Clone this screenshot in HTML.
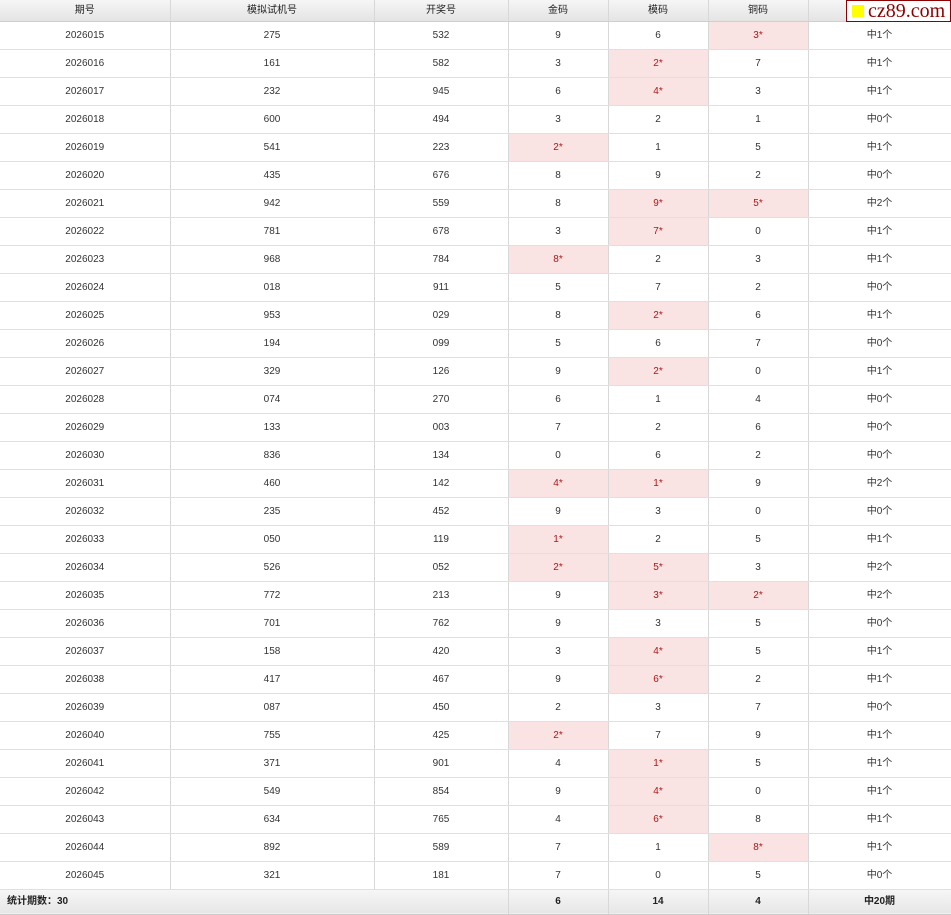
<!DOCTYPE html>
<html><head><meta charset="utf-8"><style>
*{margin:0;padding:0;box-sizing:border-box}
body{width:951px;height:914px;overflow:hidden;background:#fff;font-family:"Liberation Sans","Noto Sans CJK SC",sans-serif;font-size:10px;color:#333;position:relative}
table{border-collapse:collapse;table-layout:fixed;width:951px}
td,th{text-align:center;vertical-align:middle;line-height:12px;padding-top:2px;border-right:1px solid #d8d8d8;border-bottom:1px solid #e0e0e0;height:28px;font-weight:normal;overflow:hidden;white-space:nowrap}
th{height:21px;padding-top:1px;background:linear-gradient(#f6f6f6,#e4e4e4);border-bottom:1px solid #cfcfcf;color:#222}
td.h{background:#f9e3e3;color:#b01818}
tr.f td{height:25px;padding-top:1px;background:linear-gradient(#f6f6f6,#e6e6e6);font-weight:bold;color:#222;border-bottom:1px solid #ccc}
#logo{position:absolute;left:846px;top:0;width:105px;height:22px;background:#fff;border:1px solid #8b0000;font-family:"Liberation Serif",serif;font-size:20px;color:#8b0000;line-height:20px;padding-left:21px;white-space:nowrap;overflow:hidden}
#logo i{position:absolute;left:5px;top:4px;width:12px;height:12px;background:#ffff00}
</style></head><body>
<table>
<colgroup><col style="width:170px"><col style="width:204px"><col style="width:134px"><col style="width:100px"><col style="width:100px"><col style="width:100px"><col style="width:143px"></colgroup>
<tr><th>期号</th><th>模拟试机号</th><th>开奖号</th><th>金码</th><th>模码</th><th>铜码</th><th>结果</th></tr>
<tr><td>2026015</td><td>275</td><td>532</td><td>9</td><td>6</td><td class="h">3*</td><td>中1个</td></tr>
<tr><td>2026016</td><td>161</td><td>582</td><td>3</td><td class="h">2*</td><td>7</td><td>中1个</td></tr>
<tr><td>2026017</td><td>232</td><td>945</td><td>6</td><td class="h">4*</td><td>3</td><td>中1个</td></tr>
<tr><td>2026018</td><td>600</td><td>494</td><td>3</td><td>2</td><td>1</td><td>中0个</td></tr>
<tr><td>2026019</td><td>541</td><td>223</td><td class="h">2*</td><td>1</td><td>5</td><td>中1个</td></tr>
<tr><td>2026020</td><td>435</td><td>676</td><td>8</td><td>9</td><td>2</td><td>中0个</td></tr>
<tr><td>2026021</td><td>942</td><td>559</td><td>8</td><td class="h">9*</td><td class="h">5*</td><td>中2个</td></tr>
<tr><td>2026022</td><td>781</td><td>678</td><td>3</td><td class="h">7*</td><td>0</td><td>中1个</td></tr>
<tr><td>2026023</td><td>968</td><td>784</td><td class="h">8*</td><td>2</td><td>3</td><td>中1个</td></tr>
<tr><td>2026024</td><td>018</td><td>911</td><td>5</td><td>7</td><td>2</td><td>中0个</td></tr>
<tr><td>2026025</td><td>953</td><td>029</td><td>8</td><td class="h">2*</td><td>6</td><td>中1个</td></tr>
<tr><td>2026026</td><td>194</td><td>099</td><td>5</td><td>6</td><td>7</td><td>中0个</td></tr>
<tr><td>2026027</td><td>329</td><td>126</td><td>9</td><td class="h">2*</td><td>0</td><td>中1个</td></tr>
<tr><td>2026028</td><td>074</td><td>270</td><td>6</td><td>1</td><td>4</td><td>中0个</td></tr>
<tr><td>2026029</td><td>133</td><td>003</td><td>7</td><td>2</td><td>6</td><td>中0个</td></tr>
<tr><td>2026030</td><td>836</td><td>134</td><td>0</td><td>6</td><td>2</td><td>中0个</td></tr>
<tr><td>2026031</td><td>460</td><td>142</td><td class="h">4*</td><td class="h">1*</td><td>9</td><td>中2个</td></tr>
<tr><td>2026032</td><td>235</td><td>452</td><td>9</td><td>3</td><td>0</td><td>中0个</td></tr>
<tr><td>2026033</td><td>050</td><td>119</td><td class="h">1*</td><td>2</td><td>5</td><td>中1个</td></tr>
<tr><td>2026034</td><td>526</td><td>052</td><td class="h">2*</td><td class="h">5*</td><td>3</td><td>中2个</td></tr>
<tr><td>2026035</td><td>772</td><td>213</td><td>9</td><td class="h">3*</td><td class="h">2*</td><td>中2个</td></tr>
<tr><td>2026036</td><td>701</td><td>762</td><td>9</td><td>3</td><td>5</td><td>中0个</td></tr>
<tr><td>2026037</td><td>158</td><td>420</td><td>3</td><td class="h">4*</td><td>5</td><td>中1个</td></tr>
<tr><td>2026038</td><td>417</td><td>467</td><td>9</td><td class="h">6*</td><td>2</td><td>中1个</td></tr>
<tr><td>2026039</td><td>087</td><td>450</td><td>2</td><td>3</td><td>7</td><td>中0个</td></tr>
<tr><td>2026040</td><td>755</td><td>425</td><td class="h">2*</td><td>7</td><td>9</td><td>中1个</td></tr>
<tr><td>2026041</td><td>371</td><td>901</td><td>4</td><td class="h">1*</td><td>5</td><td>中1个</td></tr>
<tr><td>2026042</td><td>549</td><td>854</td><td>9</td><td class="h">4*</td><td>0</td><td>中1个</td></tr>
<tr><td>2026043</td><td>634</td><td>765</td><td>4</td><td class="h">6*</td><td>8</td><td>中1个</td></tr>
<tr><td>2026044</td><td>892</td><td>589</td><td>7</td><td>1</td><td class="h">8*</td><td>中1个</td></tr>
<tr><td>2026045</td><td>321</td><td>181</td><td>7</td><td>0</td><td>5</td><td>中0个</td></tr>
<tr class="f"><td colspan="3" style="text-align:left;padding-left:7px">统计期数：30</td><td>6</td><td>14</td><td>4</td><td>中20期</td></tr>
</table>
<div id="logo"><i></i>cz89.com</div>
</body></html>
